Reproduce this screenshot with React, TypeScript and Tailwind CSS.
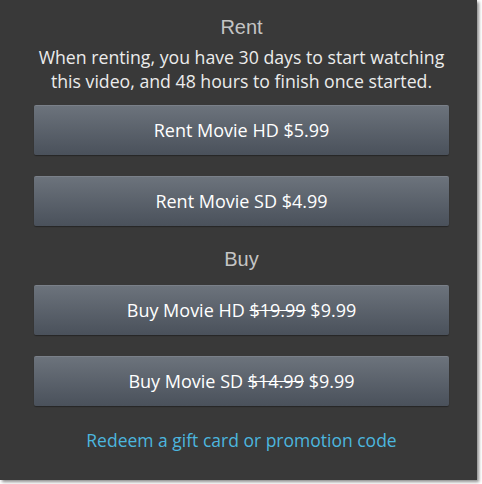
export default function App() {
  const btn =
    "flex h-[50px] w-[415px] items-center justify-center rounded-[2px] border-t border-[#7a8089] bg-gradient-to-b from-[#6c737c] to-[#4a515b] text-[18px] text-white shadow-[0_1px_1px_rgba(0,0,0,0.35)]";
  return (
    <div className="h-[484px] w-[482px] bg-white">
      <div
        className="flex h-[480px] w-[477px] flex-col items-center bg-[#393939] pl-[6px] shadow-[2px_2px_3px_rgba(0,0,0,0.45)]"
        style={{ fontFamily: '"Open Sans", "Noto Sans", sans-serif' }}
      >
        <div
          className="mt-[14px] text-[20px] leading-[26px] text-[#c4c4c4]"
          style={{ fontFamily: '"Liberation Sans", Arial, sans-serif' }}
        >
          Rent
        </div>
        <p className="mt-[5px] text-center text-[17.7px] leading-[24px] text-[#ececec]">
          When renting, you have 30 days to start watching
          <br />
          this video, and 48 hours to finish once started.
        </p>
        <div className="mt-[12px] flex flex-col gap-[21px]">
          <div className={btn}>Rent Movie HD $5.99</div>
          <div className={btn}>Rent Movie SD $4.99</div>
        </div>
        <div
          className="mt-[20px] text-[20px] leading-[26px] text-[#c4c4c4]"
          style={{ fontFamily: '"Liberation Sans", Arial, sans-serif' }}
        >
          Buy
        </div>
        <div className="mt-[13px] flex flex-col gap-[21px]">
          <div className={btn}>
            Buy Movie HD&nbsp;<span className="line-through">$19.99</span>&nbsp;$9.99
          </div>
          <div className={btn}>
            Buy Movie SD&nbsp;<span className="line-through">$14.99</span>&nbsp;$9.99
          </div>
        </div>
        <a className="mt-[22px] text-[17.5px] leading-[24px] text-[#4cb6df]">
          Redeem a gift card or promotion code
        </a>
      </div>
    </div>
  );
}
